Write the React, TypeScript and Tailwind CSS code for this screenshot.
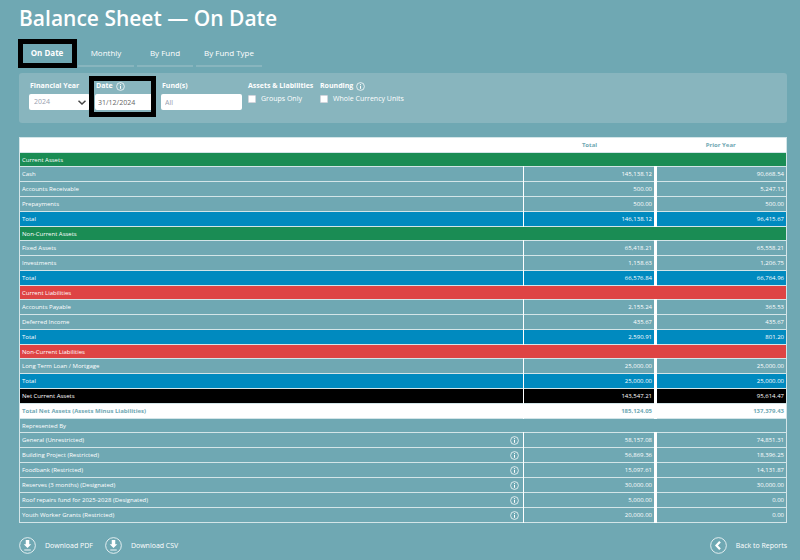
import type { ReactNode } from "react";

type RowKind = "asset" | "liability" | "item" | "total" | "net" | "grand" | "heading" | "fund";

type Row = {
  kind: RowKind;
  label: string;
  total?: string;
  prior?: string;
};

const rows: Row[] = [
  { kind: "asset", label: "Current Assets" },
  { kind: "item", label: "Cash", total: "145,138.12", prior: "90,668.54" },
  { kind: "item", label: "Accounts Receivable", total: "500.00", prior: "5,247.13" },
  { kind: "item", label: "Prepayments", total: "500.00", prior: "500.00" },
  { kind: "total", label: "Total", total: "146,138.12", prior: "96,415.67" },
  { kind: "asset", label: "Non-Current Assets" },
  { kind: "item", label: "Fixed Assets", total: "65,418.21", prior: "65,558.21" },
  { kind: "item", label: "Investments", total: "1,158.63", prior: "1,206.75" },
  { kind: "total", label: "Total", total: "66,576.84", prior: "66,764.96" },
  { kind: "liability", label: "Current Liabilities" },
  { kind: "item", label: "Accounts Payable", total: "2,155.24", prior: "365.53" },
  { kind: "item", label: "Deferred Income", total: "435.67", prior: "435.67" },
  { kind: "total", label: "Total", total: "2,590.91", prior: "801.20" },
  { kind: "liability", label: "Non-Current Liabilities" },
  { kind: "item", label: "Long Term Loan / Mortgage", total: "25,000.00", prior: "25,000.00" },
  { kind: "total", label: "Total", total: "25,000.00", prior: "25,000.00" },
  { kind: "net", label: "Net Current Assets", total: "143,547.21", prior: "95,614.47" },
  { kind: "grand", label: "Total Net Assets (Assets Minus Liabilities)", total: "185,124.05", prior: "137,379.43" },
  { kind: "heading", label: "Represented By" },
  { kind: "fund", label: "General (Unrestricted)", total: "58,157.08", prior: "74,851.31" },
  { kind: "fund", label: "Building Project (Restricted)", total: "56,869.36", prior: "18,396.25" },
  { kind: "fund", label: "Foodbank (Restricted)", total: "15,097.61", prior: "14,131.87" },
  { kind: "fund", label: "Reserves (3 months) (Designated)", total: "30,000.00", prior: "30,000.00" },
  { kind: "fund", label: "Roof repairs fund for 2025-2028 (Designated)", total: "5,000.00", prior: "0.00" },
  { kind: "fund", label: "Youth Worker Grants (Restricted)", total: "20,000.00", prior: "0.00" },
];

const rowStyle: Record<RowKind, string> = {
  asset: "h-[14px] bg-[#1a8c54]",
  liability: "h-[14px] bg-[#de4444]",
  heading: "h-[14px]",
  item: "h-[15px]",
  fund: "h-[15px]",
  total: "h-[15px] bg-[#008abf]",
  net: "h-[15px] bg-black",
  grand: "h-[15px] bg-white font-bold text-[#6fa8b3]",
};

function InfoIcon() {
  return (
    <svg viewBox="0 0 18 18" className="size-[9px] shrink-0" fill="none" stroke="currentColor" aria-hidden="true">
      <circle cx="9" cy="9" r="7.8" strokeWidth="1.5" />
      <path d="M9 7.6V13.6" strokeWidth="2" />
      <circle cx="9" cy="5" r="1.2" fill="currentColor" stroke="none" />
    </svg>
  );
}

function DownloadIcon() {
  return (
    <svg viewBox="0 0 34 34" className="size-[17px] shrink-0" aria-hidden="true">
      <circle cx="17" cy="17" r="15.7" fill="none" stroke="currentColor" strokeWidth="1.6" />
      <path d="M13.5 6H20.5V14.5H24.5L17 22L9.5 14.5H13.5Z" fill="currentColor" />
      <path d="M10.5 26H23.5" stroke="currentColor" strokeWidth="1.8" />
    </svg>
  );
}

function BackIcon() {
  return (
    <svg viewBox="0 0 34 34" className="size-[17px] shrink-0" fill="none" stroke="currentColor" aria-hidden="true">
      <circle cx="17" cy="17" r="15.7" strokeWidth="1.6" />
      <path d="M20 9.5L13 17L20 24.5" strokeWidth="4.5" />
    </svg>
  );
}

function Highlight({ className }: { className: string }) {
  return <span aria-hidden="true" className={`pointer-events-none absolute border-[5px] border-black ${className}`} />;
}

function Tab({ children, active }: { children: ReactNode; active?: boolean }) {
  return (
    <button
      type="button"
      className={`relative h-[27px] min-w-14 border-b-2 border-[#88b5be] px-2 text-[8px] ${active ? "font-bold" : ""}`}
    >
      {children}
      {active && <Highlight className="-top-px -right-[2px] -bottom-[3px] -left-px" />}
    </button>
  );
}

export default function App() {
  return (
    <main className="min-h-screen bg-[#6fa8b3] pt-1 pr-[13px] pb-1 pl-[19px] font-['Open_Sans',sans-serif] text-white">
      <h1 className="text-[21px] leading-7 font-semibold">Balance Sheet — On Date</h1>

      <nav className="mt-2 flex gap-[3px]">
        <Tab active>On Date</Tab>
        <Tab>Monthly</Tab>
        <Tab>By Fund</Tab>
        <Tab>By Fund Type</Tab>
      </nav>

      <form className="mt-[6px] flex h-[50px] gap-[5px] rounded-[3px] bg-[#88b5be] px-[10px] pt-2 text-[7px] leading-[10px]">
        <div className="w-[61px]">
          <label htmlFor="year" className="block pl-px font-bold whitespace-nowrap">Financial Year</label>
          <div className="relative mt-[3px]">
            <select
              id="year"
              defaultValue="2024"
              className="block h-4 w-full appearance-none rounded-[2px] bg-white pl-[5px] text-gray-400"
            >
              <option>2024</option>
              <option>2023</option>
            </select>
            <svg
              viewBox="0 0 16 10"
              className="pointer-events-none absolute top-[6px] right-[4px] h-[5px] w-2"
              fill="none"
              stroke="#444"
              strokeWidth="3"
              aria-hidden="true"
            >
              <path d="M1 1.5L8 8L15 1.5" />
            </svg>
          </div>
        </div>

        <div className="relative w-[61px]">
          <label htmlFor="date" className="flex items-center gap-[3px] pl-px font-bold">
            Date <InfoIcon />
          </label>
          <input
            id="date"
            type="text"
            defaultValue="31/12/2024"
            className="mt-[3px] block h-4 w-full rounded-[2px] bg-white pl-[3px] text-[#666]"
          />
          <Highlight className="-top-[5px] right-0 -left-[6px] h-[41px]" />
        </div>

        <div className="w-[81px]">
          <label htmlFor="funds" className="block pl-px font-bold">Fund(s)</label>
          <input
            id="funds"
            type="text"
            placeholder="All"
            className="mt-[3px] block h-4 w-full rounded-[2px] bg-white pl-1 text-[#666] placeholder:text-gray-400"
          />
        </div>

        <fieldset className="w-[67px] pl-px whitespace-nowrap">
          <legend className="font-bold">Assets &amp; Liabilities</legend>
          <label className="mt-[3px] flex items-center gap-[5px]">
            <input type="checkbox" className="size-[8px] appearance-none rounded-[1px] border border-gray-300 bg-white" />
            Groups Only
          </label>
        </fieldset>

        <fieldset className="pl-px whitespace-nowrap">
          <legend className="flex items-center gap-[3px] font-bold">
            Rounding <InfoIcon />
          </legend>
          <label className="mt-[3px] flex items-center gap-[5px]">
            <input type="checkbox" className="size-[8px] appearance-none rounded-[1px] border border-gray-300 bg-white" />
            Whole Currency Units
          </label>
        </fieldset>
      </form>

      <table className="mt-[14px] w-full table-fixed border-collapse border border-[#d3e5e8] text-[6px] leading-[10px]">
        <colgroup>
          <col />
          <col className="w-[132px]" />
          <col className="w-[131px]" />
        </colgroup>
        <thead>
          <tr className="h-[15px] bg-white text-[#6fa8b3]">
            <th className="p-0" />
            <th className="p-0 font-bold">Total</th>
            <th className="p-0 font-bold">Prior Year</th>
          </tr>
        </thead>
        <tbody>
          {rows.map((row, i) => (
            <tr key={i} className={`border-t border-[#d3e5e8] ${rowStyle[row.kind]}`}>
              {row.total ? (
                <>
                  <td className="p-0 px-[2px]">
                    <div className="flex items-center justify-between pr-[2px]">
                      {row.label}
                      {row.kind === "fund" && (
                        <button type="button" aria-label={`About ${row.label}`}>
                          <InfoIcon />
                        </button>
                      )}
                    </div>
                  </td>
                  <td className="border-l border-white p-0 px-[2px] text-right">{row.total}</td>
                  <td className="border-l-3 border-white p-0 px-[2px] text-right">{row.prior}</td>
                </>
              ) : (
                <td colSpan={3} className="p-0 px-[2px]">{row.label}</td>
              )}
            </tr>
          ))}
        </tbody>
      </table>

      <footer className="mt-[14px] flex items-center text-[7px] leading-[17px]">
        <a href="#pdf" className="flex items-center gap-[9px]">
          <DownloadIcon /> Download PDF
        </a>
        <a href="#csv" className="ml-3 flex items-center gap-[9px]">
          <DownloadIcon /> Download CSV
        </a>
        <a href="#reports" className="ml-auto flex items-center gap-[9px]">
          <BackIcon /> Back to Reports
        </a>
      </footer>
    </main>
  );
}
